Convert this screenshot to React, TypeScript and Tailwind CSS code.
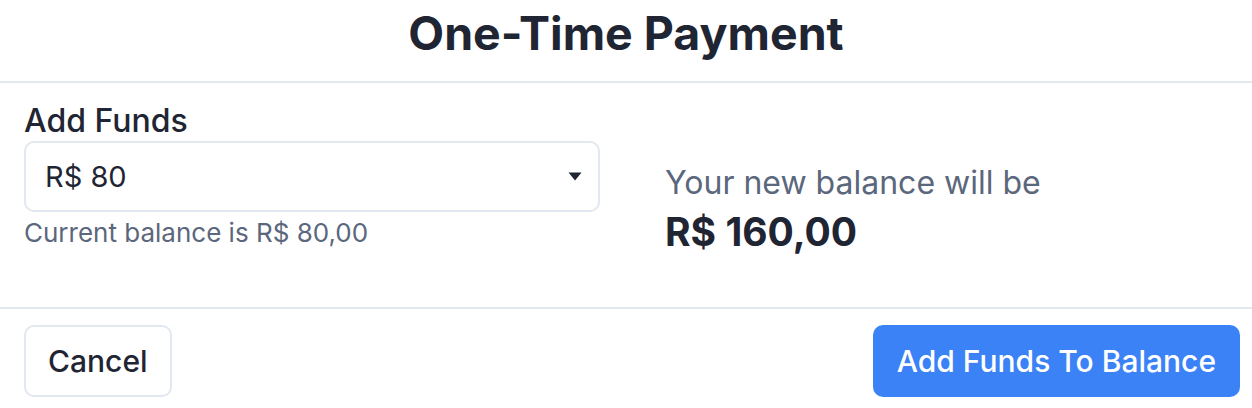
import React from 'react';

export default function App() {
  return (
    <div className="w-[1252px] h-[408px] bg-white text-[#1f2533] font-['Inter',sans-serif] overflow-hidden">
      {/* Header */}
      <div className="h-[83px] flex justify-center pt-[9px] border-b-2 border-[#e2e8f0]">
        <h1 className="text-[46.5px] font-bold leading-[48px]">One-Time Payment</h1>
      </div>

      {/* Body */}
      <div className="h-[226px] px-[24px] pt-[20px] flex border-b-2 border-[#e2e8f0]">
        <div className="w-[576px] shrink-0">
          <label className="block text-[32px] font-medium leading-[36px]">Add Funds</label>
          <div className="mt-[2px] h-[71px] rounded-[10px] border-2 border-[#e2e8f0] flex items-center justify-between pl-[19px] pr-[16px]">
            <span className="text-[29px]">R$ 80</span>
            <svg width="14" height="9" viewBox="0 0 14 9">
              <path d="M0.5 0.5h13L7 8.5z" fill="#1f2533" />
            </svg>
          </div>
          <p className="mt-[5px] text-[26px] leading-[32px] text-[#5b677c]">Current balance is R$ 80,00</p>
        </div>
        <div className="ml-[65px] pt-[60px]">
          <p className="text-[32px] text-[#5b677c] leading-[40px]">Your new balance will be</p>
          <p className="mt-[5px] text-[39px] font-bold leading-[48px]">R$ 160,00</p>
        </div>
      </div>

      {/* Footer */}
      <div className="flex justify-between items-center px-[12px] pt-[16px]">
        <button className="ml-[12px] h-[72px] px-[22px] rounded-[10px] border-2 border-[#e2e8f0] text-[30px] font-medium">
          Cancel
        </button>
        <button className="h-[72px] px-[24px] rounded-[10px] bg-[#3b82f6] text-white text-[30px] font-medium">
          Add Funds To Balance
        </button>
      </div>
    </div>
  );
}
